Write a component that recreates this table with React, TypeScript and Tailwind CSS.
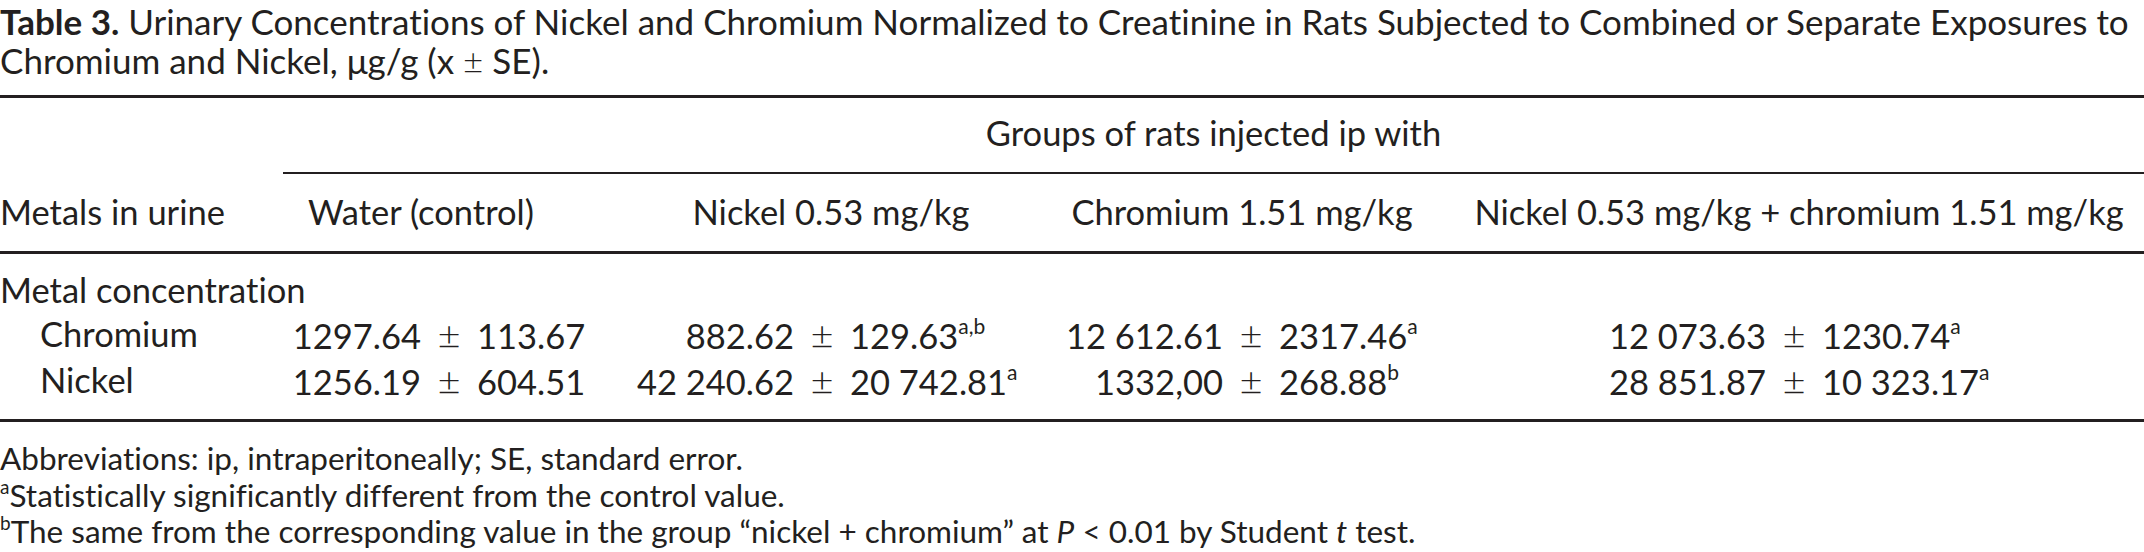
type Cell = { left: string; right: string; note?: string };

// width of the part left of the ± sign, per column, so the signs line up
const LEFT_W = ['w-[138px]', 'w-[163px]', 'w-[181px]', 'w-[307px]'];

const HEADERS = [
  { label: 'Water (control)', pad: 'pr-[72px]' },
  { label: 'Nickel 0.53 mg/kg', pad: 'pr-[11px]' },
  { label: 'Chromium 1.51 mg/kg', pad: 'pr-[17px]' },
  { label: 'Nickel 0.53 mg/kg + chromium 1.51 mg/kg', pad: 'pr-[5px]' },
];

const ROWS: { label: string; cells: Cell[] }[] = [
  {
    label: 'Chromium',
    cells: [
      { left: '1297.64', right: '113.67' },
      { left: '882.62', right: '129.63', note: 'a,b' },
      { left: '12 612.61', right: '2317.46', note: 'a' },
      { left: '12 073.63', right: '1230.74', note: 'a' },
    ],
  },
  {
    label: 'Nickel',
    cells: [
      { left: '1256.19', right: '604.51' },
      { left: '42 240.62', right: '20 742.81', note: 'a' },
      { left: '1332,00', right: '268.88', note: 'b' },
      { left: '28 851.87', right: '10 323.17', note: 'a' },
    ],
  },
];

function Rule({ thin = false }: { thin?: boolean }) {
  return <div className={thin ? 'h-[2px] bg-[#231f20]' : 'h-[3px] bg-[#231f20]'} />;
}

function Value({ cell, leftW }: { cell: Cell; leftW: string }) {
  return (
    <div className="flex items-baseline whitespace-nowrap">
      <span className={`${leftW} shrink-0 text-right`}>{cell.left}</span>
      <span className="w-[56px] shrink-0 text-center text-[40px] font-light">±</span>
      <span>
        {cell.right}
        {cell.note && <sup className="-top-[15px] text-[21px]">{cell.note}</sup>}
      </span>
    </div>
  );
}

export default function App() {
  return (
    <div className="w-[2144px] h-[552px] overflow-hidden bg-white font-['Lato',sans-serif] text-[#231f20] [font-variant-ligatures:none]">
      <div className="whitespace-nowrap text-[35px] leading-[42px]">
        <div>
          <span className="font-bold">Table 3.</span> Urinary Concentrations of Nickel and Chromium
          Normalized to Creatinine in Rats Subjected to Combined or Separate Exposures to
        </div>
        <div className="-mt-[3px]">
          Chromium and Nickel, μg/g (x <span className="font-light">±</span> SE).
        </div>
      </div>

      <div className="mt-[14px] text-[34.5px] leading-[44px]">
        <Rule />
        <div className="grid grid-cols-[283px_1fr] pt-[13px]">
          <div />
          <div>
            <div className="text-center">Groups of rats injected ip with</div>
            <div className="mt-[17px]">
              <Rule thin />
            </div>
          </div>
        </div>

        <div className="grid grid-cols-[283px_348px_411px_417px_685px] whitespace-nowrap pt-[16px] pb-[17px]">
          <div>Metals in urine</div>
          {HEADERS.map((h) => (
            <div key={h.label} className={`${h.pad} text-center`}>
              {h.label}
            </div>
          ))}
        </div>
        <Rule />

        <div className="pt-[14px] pb-[15px]">
          <div>Metal concentration</div>
          {ROWS.map((r) => (
            <div key={r.label} className="grid grid-cols-[283px_348px_411px_417px_685px]">
              <div className="pl-[40px]">{r.label}</div>
              {r.cells.map((c, i) => (
                <Value key={i} cell={c} leftW={LEFT_W[i]} />
              ))}
            </div>
          ))}
        </div>
        <Rule />
      </div>

      <div className="pt-[18px] whitespace-nowrap text-[31.5px] leading-[36.5px]">
        <div>Abbreviations: ip, intraperitoneally; SE, standard error.</div>
        <div>
          <sup className="-top-[13px] text-[19px]">a</sup>Statistically significantly different from the
          control value.
        </div>
        <div>
          <sup className="-top-[13px] text-[19px]">b</sup>The same from the corresponding value in the
          group “nickel + chromium” at <i>P</i> &lt; 0.01 by Student <i>t</i> test.
        </div>
      </div>
    </div>
  );
}
